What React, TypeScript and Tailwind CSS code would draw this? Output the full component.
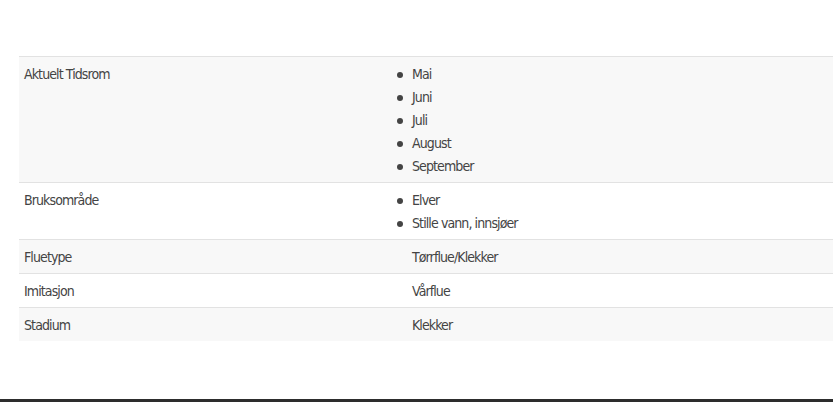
const rows: { label: string; values: string[]; list?: boolean }[] = [
  { label: 'Aktuelt Tidsrom', values: ['Mai', 'Juni', 'Juli', 'August', 'September'], list: true },
  { label: 'Bruksområde', values: ['Elver', 'Stille vann, innsjøer'], list: true },
  { label: 'Fluetype', values: ['Tørrflue/Klekker'] },
  { label: 'Imitasjon', values: ['Vårflue'] },
  { label: 'Stadium', values: ['Klekker'] },
]

export default function App() {
  return (
    <div
      className="w-[833px] h-[402px] overflow-hidden bg-white text-[#444] flex flex-col"
      style={{ fontFamily: '"DejaVu Sans Condensed", "Liberation Sans Narrow", "Liberation Sans", sans-serif' }}
    >
      {/* Spec table */}
      <div className="pt-[56px] pl-[19px]">
        <table className="w-[814px] border-collapse text-[14px] leading-[23px] tracking-[-0.9px] border-t border-[#e2e2e2]">
          <tbody>
            {rows.map((row, i) => (
              <tr
                key={row.label}
                className={`${i % 2 === 0 ? 'bg-[#f8f8f8]' : 'bg-white'} ${i < rows.length - 1 ? 'border-b border-[#e2e2e2]' : ''}`}
              >
                <td className="w-[388px] px-[5px] pt-[6px] pb-[4px] align-top">{row.label}</td>
                <td className="px-[5px] pt-[6px] pb-[4px] align-top">
                  {row.list ? (
                    <ul>
                      {row.values.map((v) => (
                        <li key={v} className="flex items-center gap-[9px] -ml-[15px]">
                          <span className="w-[6px] h-[6px] rounded-full bg-[#444] shrink-0" />
                          {v}
                        </li>
                      ))}
                    </ul>
                  ) : (
                    row.values[0]
                  )}
                </td>
              </tr>
            ))}
          </tbody>
        </table>
      </div>

      <div className="flex-1" />
      {/* Footer edge */}
      <div className="h-[3px] bg-[#2d2d2d]" />
    </div>
  )
}
